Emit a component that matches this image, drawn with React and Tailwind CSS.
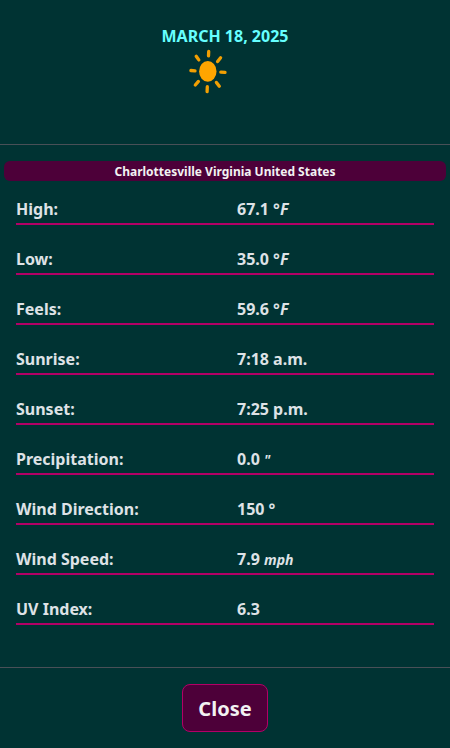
const rows = [
  { label: "High:", value: "67.1 °", unit: "F", unitClass: "italic" },
  { label: "Low:", value: "35.0 °", unit: "F", unitClass: "italic" },
  { label: "Feels:", value: "59.6 °", unit: "F", unitClass: "italic" },
  { label: "Sunrise:", value: "7:18 a.m." },
  { label: "Sunset:", value: "7:25 p.m." },
  { label: "Precipitation:", value: "0.0 ", unit: "\"", unitClass: "italic text-sm leading-none" },
  { label: "Wind Direction:", value: "150 °" },
  { label: "Wind Speed:", value: "7.9 ", unit: "mph", unitClass: "italic text-sm leading-none" },
  { label: "UV Index:", value: "6.3" },
];

function Sun() {
  return (
    <svg className="h-[48px] w-[42px]" viewBox="187 48 42 48" aria-hidden="true">
      <ellipse cx="207.8" cy="71.4" rx="8.7" ry="10.3" fill="#ffa500" />
      <path
        d="M208.7 51.5L208.5 55.9M207.3 86.7L207.1 91.6M190.9 70.5L195 70.8M220.8 72.1L225 72.4M196.2 56.3L198.8 59.9M220.6 57.8L217.6 61.6M195.3 85L198.4 81.4M216.4 82.4L219.3 86.3"
        stroke="#ffa500"
        strokeOpacity="0.95"
        strokeWidth="3.3"
        strokeLinecap="round"
        fill="none"
      />
    </svg>
  );
}

export default function App() {
  return (
    <div className="flex h-[748px] w-[450px] flex-col overflow-hidden bg-[#003333] font-['Noto_Sans',sans-serif] font-bold text-[#dee2e6]">
      <header className="flex h-[145px] shrink-0 flex-col items-center border-b border-[#495057] pt-6">
        <h1 className="text-base leading-6 text-[#66ffff]">MARCH 18, 2025</h1>
        <div className="mr-[34px]">
          <Sun />
        </div>
      </header>

      <main className="flex-1 pt-4">
        <h2 className="mx-1 h-5 rounded-md bg-[#4d0039] pt-px text-center text-xs leading-5 text-[#f2f2f2]">
          Charlottesville Virginia United States
        </h2>
        <dl className="px-4 pt-4">
          {rows.map((row) => (
            <div
              key={row.label}
              className="mb-[22px] grid h-[28px] grid-cols-2 gap-6 border-b-2 border-[#b30066] leading-6"
            >
              <dt>{row.label}</dt>
              <dd className="whitespace-pre">
                {row.value}
                {row.unit && <span className={row.unitClass}>{row.unit}</span>}
              </dd>
            </div>
          ))}
        </dl>
      </main>

      <footer className="flex h-[81px] shrink-0 justify-center border-t border-[#495057] pt-4">
        <button className="h-12 w-[86px] rounded-lg border border-[#b30066] bg-[#4d0039] pt-0.5 text-xl text-[#f2f2f2]">
          Close
        </button>
      </footer>
    </div>
  );
}
